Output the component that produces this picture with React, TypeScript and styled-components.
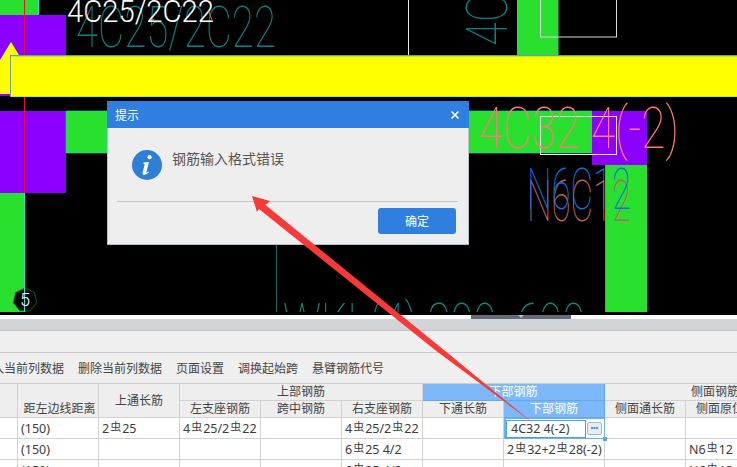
import React from "react";
import styled, { createGlobalStyle } from "styled-components";

const Global = createGlobalStyle`
  html, body { margin: 0; padding: 0; background: #fff; }
  body { font-family: "Noto Sans", "Noto Sans CJK SC", sans-serif; }
`;

const Page = styled.div`
  position: relative;
  width: 737px;
  height: 467px;
  overflow: hidden;
  display: flex;
  flex-direction: column;
  background: #efefef;
`;

const Canvas = styled.svg`
  display: block;
  flex: none;
  width: 737px;
  height: 315px;
  background: #000;
`;

const Divider = styled.div`
  flex: none;
  height: 4px;
  background: #fff;
  display: flex;
  justify-content: center;
  padding-left: 305px;
  box-sizing: border-box;
`;

const SliderHandle = styled.div`
  width: 100px;
  height: 4px;
  background: #636b75;
  display: flex;
  justify-content: center;
  &::after {
    content: "";
    border: 3px solid transparent;
    border-top: 3px solid #b9bec4;
    border-bottom: 0;
  }
`;

const Strip = styled.div`
  flex: none;
  height: 11px;
  background: #d3d4d8;
  border-bottom: 1px solid #c3c4c9;
`;

const Blank = styled.div`
  flex: none;
  height: 21px;
  background: #efefef;
  border-bottom: 1px solid #c8c8ce;
`;

const Toolbar = styled.div`
  flex: none;
  height: 30px;
  display: flex;
  align-items: center;
  gap: 14px;
  margin-left: -20px;
  background: #efefef;
  border-bottom: 1px solid #cfcfcf;
  font-size: 12px;
  color: #444;
  white-space: nowrap;
`;

const Grid = styled.div`
  display: grid;
  grid-template-columns: 18px 81px 81px 81px 81px 81px 81px 101px 81px 80px 60px;
  grid-template-rows: 17px 17px 21px 21px 21px;
  width: 766px;
  font-size: 12px;
  color: #444;
  background: #fff;
`;

const Head = styled.div<{ $col?: string; $row?: string; $align?: string; $blue?: boolean; $pad?: number }>`
  grid-column: ${(p) => p.$col ?? "auto"};
  grid-row: ${(p) => p.$row ?? "auto"};
  box-sizing: border-box;
  display: flex;
  align-items: ${(p) => p.$align ?? "center"};
  justify-content: center;
  padding-left: ${(p) => p.$pad ?? 0}px;
  white-space: nowrap;
  overflow: hidden;
  line-height: 16px;
  background: ${(p) => (p.$blue ? "#7db8fb" : "#eeeeee")};
  color: ${(p) => (p.$blue ? "#fff" : "#444")};
  border-right: 1px solid ${(p) => (p.$blue ? "#5fa8f2" : "#d2d2d2")};
  border-bottom: 1px solid ${(p) => (p.$blue ? "#5fa8f2" : "#d2d2d2")};
`;

const LeftHead = styled(Head)`
  justify-content: flex-start;
  padding-left: 10px;
`;

const Cell = styled.div`
  box-sizing: border-box;
  display: flex;
  align-items: center;
  padding-left: 3px;
  white-space: nowrap;
  overflow: hidden;
  font-size: 12.5px;
  color: #3c3c3c;
  border-right: 1px solid #d2d2d2;
  border-bottom: 1px solid #d2d2d2;
`;

const ActiveCell = styled.div`
  position: relative;
  box-sizing: border-box;
  display: flex;
  align-items: flex-start;
  gap: 1px;
  border: 1px solid #6fb0ee;
  border-left-width: 2px;
  padding-top: 1px;
  &::after {
    content: "";
    position: absolute;
    right: -3px;
    bottom: -3px;
    width: 4px;
    height: 4px;
    background: #5ba5ea;
  }
`;

const InputBox = styled.div`
  box-sizing: border-box;
  width: 80px;
  height: 18px;
  line-height: 16px;
  padding-left: 4px;
  border: 1px solid #4a9fe8;
  font-size: 12.5px;
  color: #3c3c3c;
  background: #fff;
`;

const MoreButton = styled.div`
  box-sizing: border-box;
  width: 15px;
  height: 13px;
  margin-top: 2px;
  border: 1px solid #9fbcd6;
  border-radius: 2px;
  background: #e4ecf4;
  color: #3f78b4;
  font-family: "Liberation Sans", sans-serif;
  font-size: 7px;
  line-height: 10px;
  text-align: center;
  letter-spacing: 0;
`;

const Rebar = styled.span`
  font-family: "Noto Sans CJK SC", sans-serif;
  font-size: 11px;
  position: relative;
  top: -2px;
  margin: 0 1px;
`;

const Dialog = styled.div`
  position: absolute;
  left: 107px;
  top: 101px;
  width: 362px;
  height: 144px;
  box-sizing: border-box;
  display: flex;
  flex-direction: column;
  background: #eeeeee;
  border: 1px solid #b8c0c8;
  border-top: 0;
`;

const DialogTitle = styled.div`
  flex: none;
  height: 27px;
  display: flex;
  align-items: center;
  justify-content: space-between;
  padding: 0 9px 0 8px;
  margin: 0 -1px;
  background: #2e7fe0;
  color: #fff;
  font-size: 12px;
`;

const DialogBody = styled.div`
  flex: none;
  height: 74px;
  margin: 0 10px 0 9px;
  box-sizing: border-box;
  display: flex;
  align-items: flex-start;
  gap: 10px;
  padding: 22px 0 0 15px;
  border-bottom: 1px solid #c4c4c4;
`;

const Message = styled.div`
  font-size: 14px;
  line-height: 18px;
  color: #555;
`;

const DialogFooter = styled.div`
  display: flex;
  justify-content: flex-end;
  padding: 6px 12px 0 0;
`;

const OkButton = styled.div`
  width: 78px;
  height: 26px;
  border-radius: 3px;
  background: #2e7fe0;
  color: #fff;
  font-size: 12px;
  display: flex;
  align-items: center;
  justify-content: center;
`;

const ArrowLayer = styled.svg`
  position: absolute;
  left: 0;
  top: 0;
  width: 737px;
  height: 467px;
  pointer-events: none;
`;

const CadText = ({ x, y, w, size = 58, color, children, clip }: { x: number; y: number; w: number; size?: number; color: string; children: string; clip?: string }) => (
  <text
    x={x}
    y={y}
    textLength={w}
    lengthAdjust="spacingAndGlyphs"
    fontFamily="Roboto, sans-serif"
    fontWeight={100}
    fontSize={size}
    fill={color}
    clipPath={clip}
  >
    {children}
  </text>
);

const R = () => <Rebar>虫</Rebar>;

export default function App() {
  return (
    <Page>
      <Global />
      <Canvas viewBox="0 0 737 315">
        <defs>
          <clipPath id="bottomClip">
            <rect x="0" y="0" width="737" height="312" />
          </clipPath>
        </defs>
        <rect x="0" y="0" width="38" height="15" fill="#2ae02e" />
        <rect x="38" y="0" width="1" height="15" fill="#19e6e0" />
        <rect x="0" y="15" width="66" height="81" fill="#8b00ff" />
        <polygon points="11,42 0,60 0,94 11,94 22,60" fill="#ffff00" />
        <rect x="0" y="111" width="66" height="82" fill="#8b00ff" />
        <rect x="66" y="111" width="41" height="42" fill="#2ae02e" stroke="#19d0e0" strokeWidth="0.6" />
        <rect x="0" y="193" width="24" height="119" fill="#2ae02e" />
        <rect x="24" y="193" width="1" height="119" fill="#19e6e0" />
        <rect x="24" y="0" width="1" height="193" fill="#e8102a" />

        <CadText x={76} y={47} w={200} color="#0c8080">4C25/2C22</CadText>
        <text x="67" y="22" fontFamily="Roboto, sans-serif" fontWeight={300} fontSize="31" fill="#fff" textLength="147" lengthAdjust="spacingAndGlyphs">4C25/2C22</text>
        <path d="M86 8 L87 18 M150 19 L158 21 M208 10 L212 20" stroke="#f08a8a" strokeWidth="0.8" fill="none" />

        <rect x="408" y="0" width="1" height="56" fill="#e6e6e6" />
        <rect x="517.5" y="-2" width="40.5" height="58" fill="#2ae02e" stroke="#19d0b0" strokeWidth="1" />
        <rect x="540.5" y="-2" width="76" height="39" fill="none" stroke="#d8d8d8" strokeWidth="1" />
        <g transform="translate(507 46) rotate(-90)">
          <CadText x={0} y={0} w={100} color="#0c8080">4C25</CadText>
        </g>

        <rect x="10.5" y="55.5" width="730" height="41" fill="#ffff00" stroke="#6f9f9a" strokeWidth="1" />
        <rect x="11" y="56" width="726" height="1" fill="#b6ee30" />
        <rect x="11" y="96" width="726" height="1" fill="#b6ee30" />

        <rect x="468" y="111" width="124" height="42" fill="#2ae02e" stroke="#19d0e0" strokeWidth="0.6" />
        <rect x="592" y="111" width="55" height="54" fill="#8b00ff" />
        <rect x="605" y="165" width="42" height="147" fill="#2ae02e" />
        <rect x="605" y="165" width="1" height="147" fill="#19b0d0" />
        <rect x="540.5" y="116.5" width="76" height="38" fill="none" stroke="#e6e6e6" strokeWidth="1" />
        <CadText x={479} y={148} w={200} color="#ff7a78">4C32 4(-2)</CadText>
        <CadText x={527} y={221} w={104} color="#b86460">N6C12</CadText>
        <CadText x={527} y={209} w={104} color="#0a72dc">N6C12</CadText>

        <rect x="276" y="200" width="1" height="112" fill="#0c6a6a" />
        <CadText x={283} y={344} w={302} color="#0c8a80" clip="url(#bottomClip)">WKL(4) 300x600</CadText>

        <polygon points="25,288 34.4,292.5 36.7,302.7 30.2,310.8 19.8,310.8 13.3,302.7 15.6,292.5" fill="#000" stroke="#0b7a10" strokeWidth="0.8" />
        <rect x="24" y="288" width="1" height="24" fill="#19e6e0" />
        <text x="25" y="306" textAnchor="middle" fontFamily="Roboto, sans-serif" fontWeight={300} fontSize="18" fill="#fff">5</text>
      </Canvas>
      <Divider>
        <SliderHandle />
      </Divider>
      <Strip />
      <Blank />
      <Toolbar>
        <span>插入当前列数据</span>
        <span>删除当前列数据</span>
        <span>页面设置</span>
        <span>调换起始跨</span>
        <span>悬臂钢筋代号</span>
      </Toolbar>
      <Grid>
        <Head $col="1" $row="1 / span 2" />
        <Head $col="2" $row="1 / span 2" $align="flex-end" $pad={3}>距左边线距离</Head>
        <Head $col="3" $row="1 / span 2">上通长筋</Head>
        <Head $col="4 / span 3" $row="1">上部钢筋</Head>
        <Head $col="7 / span 2" $row="1" $blue>下部钢筋</Head>
        <Head $col="9 / span 3" $row="1">侧面钢筋</Head>
        <Head $col="4" $row="2">左支座钢筋</Head>
        <Head $col="5" $row="2">跨中钢筋</Head>
        <Head $col="6" $row="2">右支座钢筋</Head>
        <Head $col="7" $row="2">下通长筋</Head>
        <Head $col="8" $row="2" $blue>下部钢筋</Head>
        <Head $col="9" $row="2">侧面通长筋</Head>
        <LeftHead $col="10" $row="2">侧面原位标注筋</LeftHead>
        <Head $col="11" $row="2" />

        <Cell />
        <Cell>(150)</Cell>
        <Cell>2<R />25</Cell>
        <Cell>4<R />25/2<R />22</Cell>
        <Cell />
        <Cell>4<R />25/2<R />22</Cell>
        <Cell />
        <ActiveCell>
          <InputBox>4C32 4(-2)</InputBox>
          <MoreButton>•••</MoreButton>
        </ActiveCell>
        <Cell />
        <Cell />
        <Cell />

        <Cell />
        <Cell>(150)</Cell>
        <Cell />
        <Cell />
        <Cell />
        <Cell>6<R />25 4/2</Cell>
        <Cell />
        <Cell>2<R />32+2<R />28(-2)</Cell>
        <Cell />
        <Cell>N6<R />12</Cell>
        <Cell />

        <Cell />
        <Cell>(150)</Cell>
        <Cell />
        <Cell />
        <Cell />
        <Cell>6<R />25 4/2</Cell>
        <Cell />
        <Cell />
        <Cell />
        <Cell>N6<R />12</Cell>
        <Cell />
      </Grid>

      <Dialog>
        <DialogTitle>
          <span>提示</span>
          <svg width="10" height="10" viewBox="0 0 10 10">
            <path d="M1.5 1.5 L8.5 8.5 M8.5 1.5 L1.5 8.5" stroke="#fff" strokeWidth="1.6" />
          </svg>
        </DialogTitle>
        <DialogBody>
          <svg width="30" height="30" viewBox="0 0 30 30">
            <circle cx="15" cy="15" r="15" fill="#2e7fd6" />
            <circle cx="17.6" cy="7.2" r="2.1" fill="#fff" />
            <path d="M11.5 12.6 L17 12 L14.4 22 Q14.2 23.3 16.4 21.6 L17 22.2 Q13.8 25.2 11.8 25 Q10 24.6 10.8 21.8 L12.6 15 Q12.8 14 11.2 13.6 Z" fill="#fff" />
          </svg>
          <Message>钢筋输入格式错误</Message>
        </DialogBody>
        <DialogFooter>
          <OkButton>确定</OkButton>
        </DialogFooter>
      </Dialog>

      <ArrowLayer viewBox="0 0 737 467">
        <polygon
          points="252,196 270,201 265.5,205 444,350 533,423 435,350 259,209 257,212"
          fill="#f63a3a"
        />
      </ArrowLayer>
    </Page>
  );
}
